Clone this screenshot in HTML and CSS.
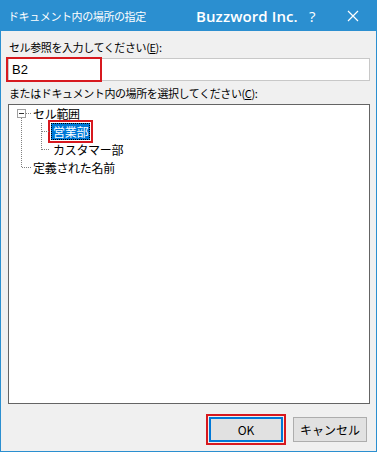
FILE: index.html
```html
<!DOCTYPE html>
<html lang="ja">
<head>
<meta charset="utf-8">
<link rel="stylesheet" href="styles.css">
</head>
<body>
<div class="window">
  <div class="titlebar">
    <span class="title">ドキュメント内の場所の指定</span>
    <span class="brand">Buzzword Inc.</span>
    <span class="help">?</span>
    <span class="close">
      <svg width="12" height="12" viewBox="0 0 12 12"><path d="M1 1L11 11M11 1L1 11" stroke="#fff" stroke-width="1.2" fill="none"/></svg>
    </span>
  </div>
  <div class="content">
    <div class="label">セル参照を入力してください(<u>E</u>):</div>
    <div class="input-wrap">
      <div class="input"><span class="hl">B2</span></div>
    </div>
    <div class="label label2">またはドキュメント内の場所を選択してください(<u>C</u>):</div>
    <div class="tree">
      <svg class="lines" width="60" height="80" viewBox="0 0 60 80">
        <rect x="8.5" y="4.5" width="8" height="8" fill="#fff" stroke="#a0a0a0"/>
        <path d="M10 8.5H15" stroke="#333"/>
        <path d="M12.5 13V63M17 8.5H23M13 62.5H23M32.5 18V45M33 26.5H40M33 44.5H40" stroke="#808080" stroke-dasharray="1 1" fill="none"/>
      </svg>
      <div class="row lv1">セル範囲</div>
      <div class="row lv2"><span class="sel">営業部</span></div>
      <div class="row lv2 plain">カスタマー部</div>
      <div class="row lv1">定義された名前</div>
    </div>
    <div class="buttons">
      <button class="btn ok">OK</button>
      <button class="btn">キャンセル</button>
    </div>
  </div>
</div>
</body>
</html>
```
FILE: styles.css
```css
html, body {
  margin: 0;
  padding: 0;
  background: #f0f0f0;
}
body {
  font-family: "Noto Sans CJK JP", "Noto Sans", sans-serif;
  font-size: 11px;
  color: #000;
}
.window {
  width: 377px;
  height: 452px;
  box-sizing: border-box;
  border: 1px solid #2b8fd0;
  border-top: none;
  background: #f0f0f0;
  display: flex;
  flex-direction: column;
}
.titlebar {
  height: 31px;
  background: #2b8fd0;
  color: #fff;
  display: flex;
  align-items: center;
  margin: 0 -1px;
  padding-left: 8px;
}
.title {
  font-size: 11px;
  letter-spacing: -0.4px;
  width: 188px;
}
.brand {
  font-family: "Open Sans", sans-serif;
  font-weight: 600;
  font-size: 15px;
  letter-spacing: 0.1px;
  width: 113px;
}
.help {
  font-family: "Open Sans", sans-serif;
  font-size: 15px;
  width: 38px;
}
.close {
  display: flex;
  align-items: center;
}
.content {
  flex: 1;
  display: flex;
  flex-direction: column;
  padding: 8px 6px 0 6px;
}
.label {
  height: 16px;
  line-height: 16px;
  padding-left: 2px;
  letter-spacing: -0.4px;
}
.label u {
  text-decoration: underline;
}
.input-wrap {
  padding-top: 3px;
}
.input {
  height: 23px;
  box-sizing: border-box;
  border: 1px solid #c8c8c8;
  background: #fff;
  margin-left: 1px;
  display: flex;
  align-items: center;
}
.hl {
  display: inline-block;
  width: 92px;
  height: 21px;
  line-height: 21px;
  padding-left: 4px;
  font-family: "Liberation Sans", sans-serif;
  font-size: 13px;
  outline: 2px solid #d7191f;
  outline-offset: 0px;
  margin-left: -1px;
  box-sizing: border-box;
}
.label2 {
  margin-top: 4px;
}
.tree {
  position: relative;
  margin-top: 3px;
  height: 300px;
  box-sizing: border-box;
  border: 1px solid #646464;
  background: #fff;
  margin-left: 1px;
}
.lines {
  position: absolute;
  left: 0;
  top: 0;
}
.row {
  height: 18px;
  line-height: 18px;
  font-size: 12px;
  letter-spacing: -0.3px;
}
.lv1 {
  padding-left: 24px;
}
.lv2 {
  padding-left: 42px;
}
.plain {
  padding-left: 44px;
}
.sel {
  display: inline-block;
  background: #0078d7;
  color: #fff;
  height: 17px;
  line-height: 17px;
  padding: 0 2px;
  outline: 1px dotted #000;
  outline-offset: -1px;
  box-shadow: 0 0 0 1px #fff, 0 0 0 3px #d7191f;
}
.buttons {
  display: flex;
  justify-content: flex-end;
  gap: 10px;
  padding-top: 13px;
  padding-right: 3px;
}
.btn {
  width: 74px;
  height: 25px;
  box-sizing: border-box;
  border: 1px solid #adadad;
  background: #e1e1e1;
  font-family: "Noto Sans CJK JP", sans-serif;
  font-size: 12px;
  padding: 0;
  color: #000;
}
.ok {
  border: 2px solid #0078d7;
  outline: 2px solid #d7191f;
  outline-offset: 1px;
}
```
